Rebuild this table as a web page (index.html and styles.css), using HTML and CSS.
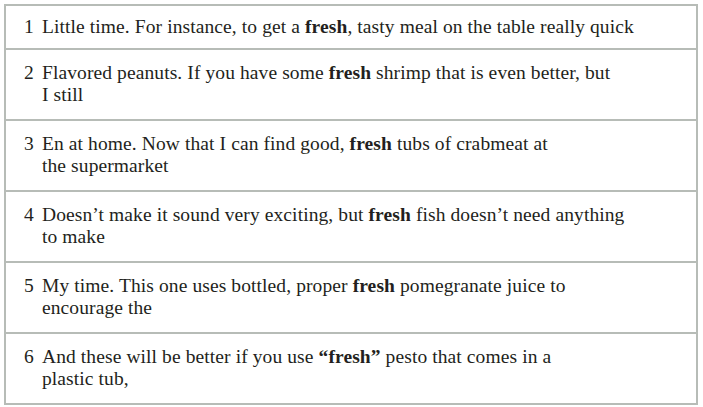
FILE: index.html
```html
<!DOCTYPE html>
<html>
<head>
<meta charset="utf-8">
<link rel="stylesheet" href="styles.css">
</head>
<body>
<table class="examples">
  <tr><td class="num">1</td><td class="txt">Little time. For instance, to get a <b>fresh</b>, tasty meal on the table really quick</td></tr>
  <tr><td class="num">2</td><td class="txt">Flavored peanuts. If you have some <b>fresh</b> shrimp that is even better, but<br>I still</td></tr>
  <tr><td class="num">3</td><td class="txt">En at home. Now that I can find good, <b>fresh</b> tubs of crabmeat at<br>the supermarket</td></tr>
  <tr><td class="num">4</td><td class="txt">Doesn’t make it sound very exciting, but <b>fresh</b> fish doesn’t need anything<br>to make</td></tr>
  <tr><td class="num">5</td><td class="txt">My time. This one uses bottled, proper <b>fresh</b> pomegranate juice to<br>encourage the</td></tr>
  <tr><td class="num">6</td><td class="txt">And these will be better if you use <b>“fresh”</b> pesto that comes in a<br>plastic tub,</td></tr>
</table>
</body>
</html>
```

FILE: styles.css
```css
html, body {
  margin: 0;
  padding: 0;
  background: #ffffff;
}
body {
  padding: 4px 5px 0 4px;
  font-family: "Liberation Serif", "DejaVu Serif", serif;
  font-size: 19.5px;
  letter-spacing: 0.1px;
  line-height: 22px;
  color: #231f20;
}
.examples {
  width: 694px;
  border-collapse: collapse;
  border: 2px solid #b7bcb7;
}
.examples tr {
  border-top: 2px solid #b7bcb7;
}
.examples td {
  vertical-align: top;
  padding: 12px 0 13px 0;
}
.examples tr:first-child td {
  padding: 10px 0 10px 0;
}
.num {
  width: 18px;
  padding-left: 18px !important;
  white-space: nowrap;
}
.txt {
  padding-right: 4px !important;
}
b {
  font-weight: bold;
}
```
